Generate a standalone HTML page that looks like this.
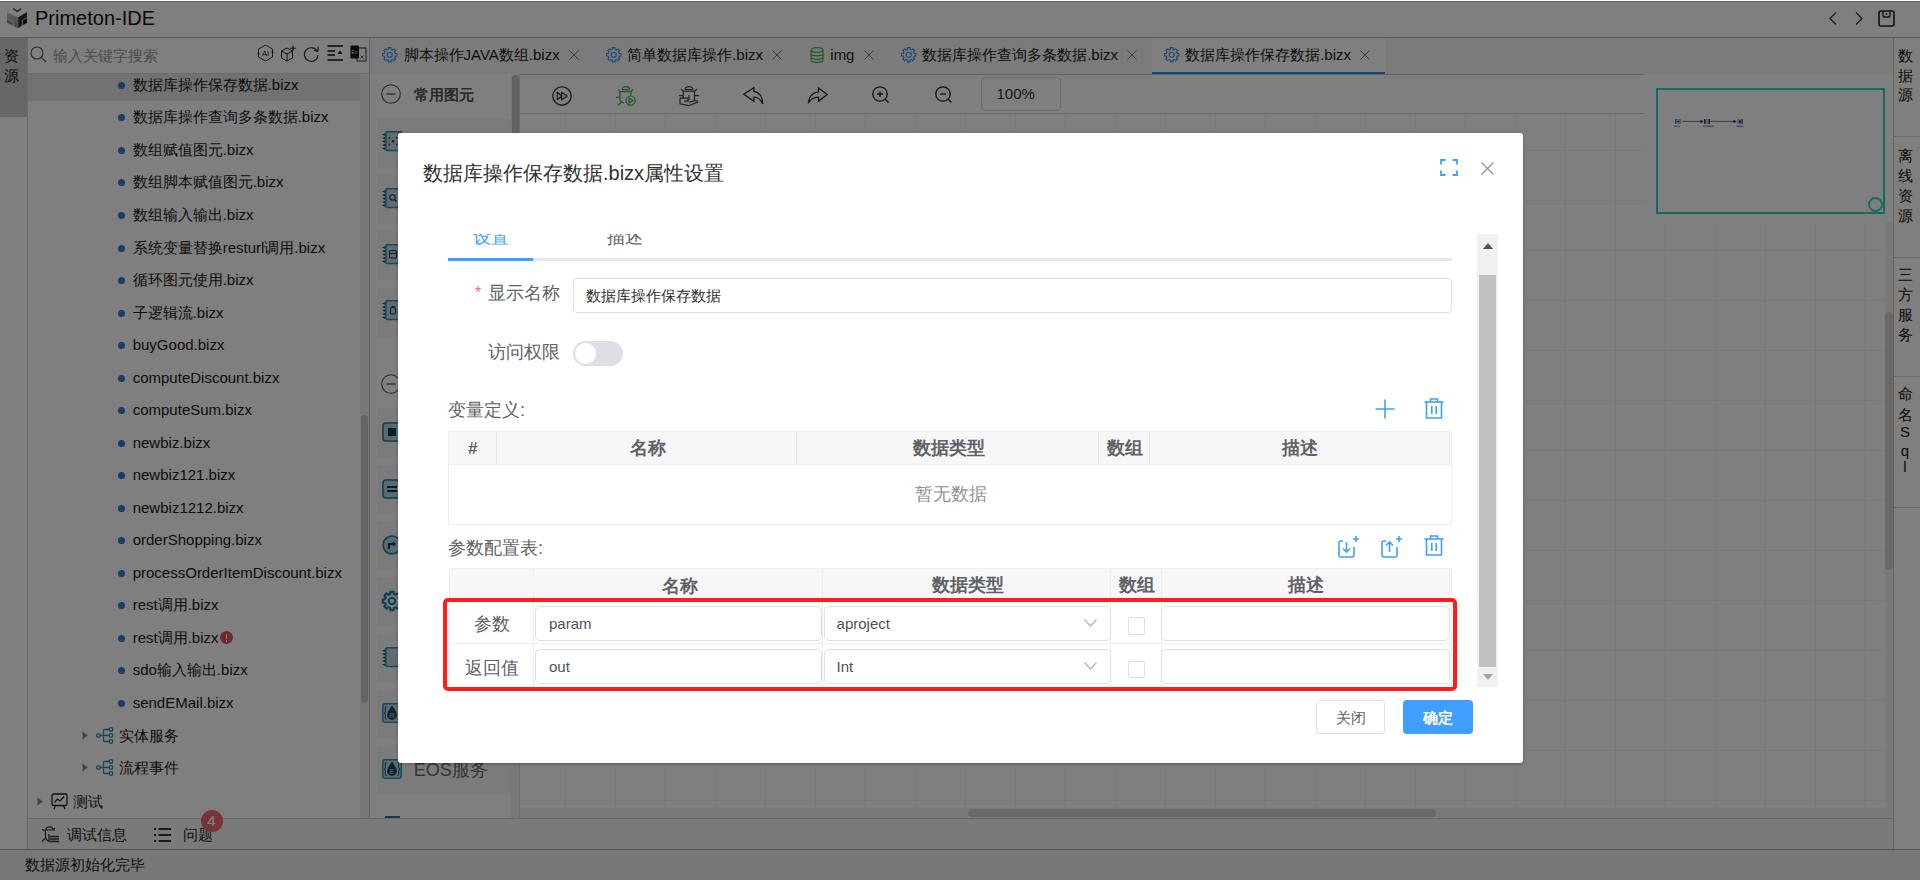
<!DOCTYPE html>
<html><head><meta charset="utf-8"><style>
*{box-sizing:border-box;margin:0;padding:0}
html,body{width:1920px;height:880px;overflow:hidden;background:#fff;font-family:"Liberation Sans",sans-serif;color:#303133}
.a{position:absolute}
.t{position:absolute;white-space:nowrap;line-height:1}
svg{position:absolute;overflow:visible}
#title{left:0;top:1px;width:1920px;height:37px;background:#fff;border-top:1px solid #c8c8c8;border-bottom:1px solid #b8b8b8}
#lstrip{left:0;top:38px;width:28px;height:812px;background:#fff;border-right:1px solid #d4d4d4}
#lstripSel{left:0;top:38px;width:27px;height:79px;background:#cfcfcf}
#tree{left:28px;top:38px;width:342px;height:780px;background:#fff}
#search{left:28px;top:38px;width:342px;height:36px;border-bottom:1px solid #d8d8d8}
#palette{left:369px;top:74px;width:151px;height:744px;background:#fff;border-left:1px solid #c8c8c8;border-right:1px solid #d8d8d8}
#tabs{left:369px;top:38px;width:1524px;height:37px;background:#f7f7f7;border-bottom:1px solid #c8c8c8;border-left:1px solid #c8c8c8}
#toolbar{left:520px;top:74px;width:1124px;height:40px;border-bottom:1px solid #d0d0d0}
#canvas{left:520px;top:114px;width:1365px;height:694px;
  background-image:linear-gradient(to right, rgba(0,0,0,0.045) 1px, transparent 1px),linear-gradient(to bottom, rgba(0,0,0,0.045) 1px, transparent 1px);
  background-size:50px 50px;background-position:45px 36px}
#rstrip{left:1893px;top:38px;width:27px;height:812px;background:#fff;border-left:1px solid #c4c4c4}
#bottom{left:28px;top:818px;width:1865px;height:32px;background:#f5f5f5;border-top:1px solid #d0d0d0;border-bottom:1px solid #a8a8a8}
#status{left:0;top:849px;width:1920px;height:31px;background:#f0f0f0;border-top:1px solid #a8a8a8}
.mask{position:absolute;left:0;top:1px;width:1920px;height:879px;background:rgba(0,0,0,0.5)}
.dlg{position:absolute;left:398px;top:133px;width:1125px;height:630px;background:#fff;border-radius:3px;box-shadow:0 1px 3px rgba(0,0,0,.3)}
</style></head><body>
<div class="a" style="left:0;top:0;width:1920px;height:1px;background:#fff"></div>
<div class="a" id="title"></div>
<svg style="left:0;top:0" width="40" height="40" viewBox="0 0 40 40">
<defs><linearGradient id="lg1" x1="0" y1="0" x2="0" y2="1"><stop offset="0" stop-color="#c4c4c4"/><stop offset="1" stop-color="#8a8a8a"/></linearGradient></defs>
<path d="M13.2 8.6 L17.3 11.4 L21 8.9" fill="none" stroke="#444" stroke-width="1.4"/>
<path d="M7 12.2 L17.9 17.2 L17.9 28.2 L13.6 26 L13.6 21.6 L7 18.4 Z" fill="url(#lg1)"/>
<path d="M7 19.2 L12.8 22 L12.8 25.6 L7 22.8 Z" fill="#8c8c8c"/>
<path d="M18.3 17.2 L27 12.2 L27 17.6 L21.8 20.3 L21.8 25.8 L18.3 27.9 Z" fill="#2a2a2a"/>
<path d="M22.6 20.4 L27 18.3 L27 23 L22.6 25.2 Z" fill="#161616"/>
</svg>
<div class="t" style="left:35.0px;top:8.0px;font-size:20px;color:#111;font-weight:400;top:8px">Primeton-IDE</div>
<svg style="left:1829px;top:12px" width="8" height="13" viewBox="0 0 8 13"><path d="M7 0.5 L1 6.5 L7 12.5" fill="none" stroke="#333" stroke-width="1.2"/></svg>
<svg style="left:1855px;top:12px" width="8" height="13" viewBox="0 0 8 13"><path d="M1 0.5 L7 6.5 L1 12.5" fill="none" stroke="#333" stroke-width="1.2"/></svg>
<svg style="left:1878px;top:10px" width="17" height="17" viewBox="0 0 17 17"><rect x="1" y="1" width="15" height="15" rx="2" fill="none" stroke="#222" stroke-width="1.6"/><path d="M5 1 V5.5 Q5 7 6.5 7 H10.5 Q12 7 12 5.5 V1" fill="none" stroke="#222" stroke-width="1.4"/><path d="M8.5 3 V5" stroke="#222" stroke-width="1.2"/></svg>
<div class="a" id="lstrip"></div>
<div class="a" id="lstripSel"></div>
<div class="t" style="left:4.2px;top:48.0px;font-size:15px;color:#111;font-weight:400;">资</div>
<div class="t" style="left:4.2px;top:68.0px;font-size:15px;color:#111;font-weight:400;">源</div>
<div class="a" id="tree"></div>
<div class="a" id="search"></div>
<svg style="left:30px;top:46px" width="17" height="17" viewBox="0 0 17 17"><circle cx="7" cy="7" r="6" fill="none" stroke="#555" stroke-width="1.1"/><path d="M11.3 11.3 L16 16" stroke="#555" stroke-width="1.2"/></svg>
<div class="t" style="left:53.0px;top:48.0px;font-size:15px;color:#9a9a9a;font-weight:400;">输入关键字搜索</div>
<svg style="left:257px;top:44px" width="17" height="18" viewBox="0 0 17 18">
<path d="M8.5 1 L15.5 5 L15.5 13 L8.5 17 L1.5 13 L1.5 5 Z" fill="none" stroke="#222" stroke-width="0.9"/>
<text x="8.5" y="11.8" font-size="7.5" font-family="Liberation Sans" font-weight="400" text-anchor="middle" fill="#222">AI</text>
<circle cx="1.5" cy="9.5" r="1" fill="#222"/><circle cx="15.5" cy="8" r="1" fill="#222"/></svg>
<svg style="left:280px;top:45px" width="17" height="17" viewBox="0 0 17 17">
<path d="M7 3 L12.5 6 L12.5 13 L7 16 L1.5 13 L1.5 6 Z M1.5 6 L7 9 L12.5 6 M7 9 V16" fill="none" stroke="#222" stroke-width="1"/>
<path d="M13 0.5 V6 M10.3 3.2 H15.8" stroke="#222" stroke-width="1.1"/></svg>
<svg style="left:303px;top:46px" width="17" height="17" viewBox="0 0 17 17"><path d="M14.5 6 A6.8 6.8 0 1 0 15 9" fill="none" stroke="#333" stroke-width="1.2"/><path d="M11 4.5 L15 4.8 L15.2 0.8" fill="none" stroke="#333" stroke-width="1.1"/></svg>
<svg style="left:327px;top:45px" width="17" height="16" viewBox="0 0 17 16"><path d="M0.5 1 H16 M0.5 6 H8 M0.5 10 H8 M0.5 15 H16" stroke="#111" stroke-width="1.3"/><path d="M10.5 9 L13 5.5 L15.5 9 Z" fill="#111"/></svg>
<svg style="left:350px;top:45px" width="17" height="17" viewBox="0 0 17 17"><rect x="7" y="3" width="9" height="13" fill="none" stroke="#333" stroke-width="1"/><rect x="0.5" y="0.5" width="8.5" height="13" rx="1" fill="#111"/><text x="4.5" y="9" font-size="5" fill="#ddd" text-anchor="middle" font-family="Liberation Sans">En</text><path d="M10.5 10.5 L13.5 13.5 M13.5 10.5 L10.5 13.5" stroke="#333" stroke-width="0.8"/></svg>
<div class="a" style="left:28px;top:73.5px;width:332px;height:27px;background:#e4e4e4"></div>
<div class="a" style="left:360px;top:74px;width:9px;height:744px;background:#f0f0f0"></div>
<div class="a" style="left:360.5px;top:415px;width:7.5px;height:288px;background:#c8c8c8;border-radius:4px"></div>
<div class="a" style="left:118px;top:81.8px;width:7px;height:7px;border-radius:50%;background:#2f7ad6"></div>
<div class="t" style="left:132.7px;top:76.8px;font-size:15px;color:#1a1a1a;font-weight:400;">数据库操作保存数据.bizx</div>
<div class="a" style="left:118px;top:114.3px;width:7px;height:7px;border-radius:50%;background:#2f7ad6"></div>
<div class="t" style="left:132.7px;top:109.3px;font-size:15px;color:#1a1a1a;font-weight:400;">数据库操作查询多条数据.bizx</div>
<div class="a" style="left:118px;top:146.9px;width:7px;height:7px;border-radius:50%;background:#2f7ad6"></div>
<div class="t" style="left:132.7px;top:141.9px;font-size:15px;color:#1a1a1a;font-weight:400;">数组赋值图元.bizx</div>
<div class="a" style="left:118px;top:179.4px;width:7px;height:7px;border-radius:50%;background:#2f7ad6"></div>
<div class="t" style="left:132.7px;top:174.4px;font-size:15px;color:#1a1a1a;font-weight:400;">数组脚本赋值图元.bizx</div>
<div class="a" style="left:118px;top:211.9px;width:7px;height:7px;border-radius:50%;background:#2f7ad6"></div>
<div class="t" style="left:132.7px;top:206.9px;font-size:15px;color:#1a1a1a;font-weight:400;">数组输入输出.bizx</div>
<div class="a" style="left:118px;top:244.5px;width:7px;height:7px;border-radius:50%;background:#2f7ad6"></div>
<div class="t" style="left:132.7px;top:239.5px;font-size:15px;color:#1a1a1a;font-weight:400;">系统变量替换resturl调用.bizx</div>
<div class="a" style="left:118px;top:277.0px;width:7px;height:7px;border-radius:50%;background:#2f7ad6"></div>
<div class="t" style="left:132.7px;top:272.0px;font-size:15px;color:#1a1a1a;font-weight:400;">循环图元使用.bizx</div>
<div class="a" style="left:118px;top:309.5px;width:7px;height:7px;border-radius:50%;background:#2f7ad6"></div>
<div class="t" style="left:132.7px;top:304.5px;font-size:15px;color:#1a1a1a;font-weight:400;">子逻辑流.bizx</div>
<div class="a" style="left:118px;top:342.0px;width:7px;height:7px;border-radius:50%;background:#2f7ad6"></div>
<div class="t" style="left:132.7px;top:337.0px;font-size:15px;color:#1a1a1a;font-weight:400;">buyGood.bizx</div>
<div class="a" style="left:118px;top:374.6px;width:7px;height:7px;border-radius:50%;background:#2f7ad6"></div>
<div class="t" style="left:132.7px;top:369.6px;font-size:15px;color:#1a1a1a;font-weight:400;">computeDiscount.bizx</div>
<div class="a" style="left:118px;top:407.1px;width:7px;height:7px;border-radius:50%;background:#2f7ad6"></div>
<div class="t" style="left:132.7px;top:402.1px;font-size:15px;color:#1a1a1a;font-weight:400;">computeSum.bizx</div>
<div class="a" style="left:118px;top:439.6px;width:7px;height:7px;border-radius:50%;background:#2f7ad6"></div>
<div class="t" style="left:132.7px;top:434.6px;font-size:15px;color:#1a1a1a;font-weight:400;">newbiz.bizx</div>
<div class="a" style="left:118px;top:472.2px;width:7px;height:7px;border-radius:50%;background:#2f7ad6"></div>
<div class="t" style="left:132.7px;top:467.2px;font-size:15px;color:#1a1a1a;font-weight:400;">newbiz121.bizx</div>
<div class="a" style="left:118px;top:504.7px;width:7px;height:7px;border-radius:50%;background:#2f7ad6"></div>
<div class="t" style="left:132.7px;top:499.7px;font-size:15px;color:#1a1a1a;font-weight:400;">newbiz1212.bizx</div>
<div class="a" style="left:118px;top:537.2px;width:7px;height:7px;border-radius:50%;background:#2f7ad6"></div>
<div class="t" style="left:132.7px;top:532.2px;font-size:15px;color:#1a1a1a;font-weight:400;">orderShopping.bizx</div>
<div class="a" style="left:118px;top:569.8px;width:7px;height:7px;border-radius:50%;background:#2f7ad6"></div>
<div class="t" style="left:132.7px;top:564.8px;font-size:15px;color:#1a1a1a;font-weight:400;">processOrderItemDiscount.bizx</div>
<div class="a" style="left:118px;top:602.3px;width:7px;height:7px;border-radius:50%;background:#2f7ad6"></div>
<div class="t" style="left:132.7px;top:597.3px;font-size:15px;color:#1a1a1a;font-weight:400;">rest调用.bizx</div>
<div class="a" style="left:118px;top:634.8px;width:7px;height:7px;border-radius:50%;background:#2f7ad6"></div>
<div class="t" style="left:132.7px;top:629.8px;font-size:15px;color:#1a1a1a;font-weight:400;">rest调用.bizx</div>
<div class="a" style="left:118px;top:667.3px;width:7px;height:7px;border-radius:50%;background:#2f7ad6"></div>
<div class="t" style="left:132.7px;top:662.3px;font-size:15px;color:#1a1a1a;font-weight:400;">sdo输入输出.bizx</div>
<div class="a" style="left:118px;top:699.9px;width:7px;height:7px;border-radius:50%;background:#2f7ad6"></div>
<div class="t" style="left:132.7px;top:694.9px;font-size:15px;color:#1a1a1a;font-weight:400;">sendEMail.bizx</div>
<div class="a" style="left:220px;top:631px;width:13px;height:13px;border-radius:50%;background:#e05252"></div>
<div class="a" style="left:225.6px;top:634px;width:1.8px;height:5px;background:#fff"></div><div class="a" style="left:225.6px;top:640px;width:1.8px;height:1.8px;background:#fff"></div>
<svg style="left:81.5px;top:730.9px" width="7" height="9" viewBox="0 0 7 9"><path d="M0.5 0.5 L6 4.5 L0.5 8.5 Z" fill="#8a8a8a"/></svg>
<svg style="left:96px;top:726.9px" width="18" height="17" viewBox="0 0 18 17"><g fill="none" stroke="#2a8ab0" stroke-width="1.3"><circle cx="2.5" cy="8.5" r="1.8"/><circle cx="15" cy="2.5" r="1.8"/><circle cx="15" cy="8.5" r="1.8"/><circle cx="15" cy="14.5" r="1.8"/><path d="M4.3 8.5 H13.2 M7.5 8.5 V3.5 Q7.5 2.5 8.5 2.5 H13.2 M7.5 8.5 V13.5 Q7.5 14.5 8.5 14.5 H13.2"/></g></svg>
<div class="t" style="left:118.6px;top:727.8px;font-size:15px;color:#1a1a1a;font-weight:400;">实体服务</div>
<svg style="left:81.5px;top:763.1px" width="7" height="9" viewBox="0 0 7 9"><path d="M0.5 0.5 L6 4.5 L0.5 8.5 Z" fill="#8a8a8a"/></svg>
<svg style="left:96px;top:759.1px" width="18" height="17" viewBox="0 0 18 17"><g fill="none" stroke="#2a8ab0" stroke-width="1.3"><circle cx="2.5" cy="8.5" r="1.8"/><circle cx="15" cy="2.5" r="1.8"/><circle cx="15" cy="8.5" r="1.8"/><circle cx="15" cy="14.5" r="1.8"/><path d="M4.3 8.5 H13.2 M7.5 8.5 V3.5 Q7.5 2.5 8.5 2.5 H13.2 M7.5 8.5 V13.5 Q7.5 14.5 8.5 14.5 H13.2"/></g></svg>
<div class="t" style="left:118.6px;top:760.0px;font-size:15px;color:#1a1a1a;font-weight:400;">流程事件</div>
<svg style="left:37px;top:796.5px" width="7" height="9" viewBox="0 0 7 9"><path d="M0.5 0.5 L6 4.5 L0.5 8.5 Z" fill="#8a8a8a"/></svg>
<svg style="left:50.5px;top:793px" width="17" height="17" viewBox="0 0 17 17"><rect x="1" y="1" width="15" height="11.5" rx="1.5" fill="none" stroke="#222" stroke-width="1.3"/><path d="M3.5 9.5 L6.5 6 L9 8 L13 3.5" fill="none" stroke="#222" stroke-width="1.2"/><path d="M4.5 12.5 L3 16.3 M12.5 12.5 L14 16.3" stroke="#222" stroke-width="1.3"/></svg>
<div class="t" style="left:72.5px;top:794.2px;font-size:15px;color:#1a1a1a;font-weight:400;">测试</div>
<div class="a" id="tabs"></div>
<div class="a" style="left:1152px;top:38px;width:233px;height:35px;background:#fff"></div>
<div class="a" style="left:1152px;top:71.5px;width:233px;height:2.5px;background:#3388ee"></div>
<svg style="left:382px;top:46.8px" width="15.5" height="15.5" viewBox="0 0 24 24"><path fill="none" stroke="#3f8ee0" stroke-width="1.75" stroke-linejoin="round" d="M20.53 9.85 L23.03 10.03 L23.03 13.97 L20.53 14.15 L20.30 14.24 L19.45 16.29 L19.55 16.51 L21.19 18.40 L18.40 21.19 L16.51 19.55 L16.29 19.45 L14.24 20.30 L14.15 20.53 L13.97 23.03 L10.03 23.03 L9.85 20.53 L9.76 20.30 L7.71 19.45 L7.49 19.55 L5.60 21.19 L2.81 18.40 L4.45 16.51 L4.55 16.29 L3.70 14.24 L3.47 14.15 L0.97 13.97 L0.97 10.03 L3.47 9.85 L3.70 9.76 L4.55 7.71 L4.45 7.49 L2.81 5.60 L5.60 2.81 L7.49 4.45 L7.71 4.55 L9.76 3.70 L9.85 3.47 L10.03 0.97 L13.97 0.97 L14.15 3.47 L14.24 3.70 L16.29 4.55 L16.51 4.45 L18.40 2.81 L21.19 5.60 L19.55 7.49 L19.45 7.71 L20.30 9.76 Z"/><circle cx="12" cy="12" r="3.9" fill="none" stroke="#3f8ee0" stroke-width="1.75"/></svg>
<div class="t" style="left:403.5px;top:47.0px;font-size:15px;color:#1a1a1a;font-weight:400;">脚本操作JAVA数组.bizx</div>
<svg style="left:568.7px;top:49.5px" width="10" height="10" viewBox="0 0 10 10"><path d="M0.5 0.5 L9.5 9.5 M9.5 0.5 L0.5 9.5" stroke="#7a7a7a" stroke-width="1"/></svg>
<svg style="left:606px;top:46.8px" width="15.5" height="15.5" viewBox="0 0 24 24"><path fill="none" stroke="#3f8ee0" stroke-width="1.75" stroke-linejoin="round" d="M20.53 9.85 L23.03 10.03 L23.03 13.97 L20.53 14.15 L20.30 14.24 L19.45 16.29 L19.55 16.51 L21.19 18.40 L18.40 21.19 L16.51 19.55 L16.29 19.45 L14.24 20.30 L14.15 20.53 L13.97 23.03 L10.03 23.03 L9.85 20.53 L9.76 20.30 L7.71 19.45 L7.49 19.55 L5.60 21.19 L2.81 18.40 L4.45 16.51 L4.55 16.29 L3.70 14.24 L3.47 14.15 L0.97 13.97 L0.97 10.03 L3.47 9.85 L3.70 9.76 L4.55 7.71 L4.45 7.49 L2.81 5.60 L5.60 2.81 L7.49 4.45 L7.71 4.55 L9.76 3.70 L9.85 3.47 L10.03 0.97 L13.97 0.97 L14.15 3.47 L14.24 3.70 L16.29 4.55 L16.51 4.45 L18.40 2.81 L21.19 5.60 L19.55 7.49 L19.45 7.71 L20.30 9.76 Z"/><circle cx="12" cy="12" r="3.9" fill="none" stroke="#3f8ee0" stroke-width="1.75"/></svg>
<div class="t" style="left:627.2px;top:47.0px;font-size:15px;color:#1a1a1a;font-weight:400;">简单数据库操作.bizx</div>
<svg style="left:772px;top:49.5px" width="10" height="10" viewBox="0 0 10 10"><path d="M0.5 0.5 L9.5 9.5 M9.5 0.5 L0.5 9.5" stroke="#7a7a7a" stroke-width="1"/></svg>
<svg style="left:809.5px;top:47px" width="14" height="16" viewBox="0 0 14 16"><g fill="none" stroke="#4caf50" stroke-width="1.2"><ellipse cx="7" cy="3" rx="6" ry="2.3"/><path d="M1 3 V13 Q1 15.3 7 15.3 Q13 15.3 13 13 V3 M1 6.5 Q1 8.8 7 8.8 Q13 8.8 13 6.5 M1 10 Q1 12.3 7 12.3 Q13 12.3 13 10"/></g></svg>
<div class="t" style="left:830.3px;top:47.0px;font-size:15px;color:#1a1a1a;font-weight:400;">img</div>
<svg style="left:863.5px;top:49.5px" width="10" height="10" viewBox="0 0 10 10"><path d="M0.5 0.5 L9.5 9.5 M9.5 0.5 L0.5 9.5" stroke="#7a7a7a" stroke-width="1"/></svg>
<svg style="left:901px;top:46.8px" width="15.5" height="15.5" viewBox="0 0 24 24"><path fill="none" stroke="#3f8ee0" stroke-width="1.75" stroke-linejoin="round" d="M20.53 9.85 L23.03 10.03 L23.03 13.97 L20.53 14.15 L20.30 14.24 L19.45 16.29 L19.55 16.51 L21.19 18.40 L18.40 21.19 L16.51 19.55 L16.29 19.45 L14.24 20.30 L14.15 20.53 L13.97 23.03 L10.03 23.03 L9.85 20.53 L9.76 20.30 L7.71 19.45 L7.49 19.55 L5.60 21.19 L2.81 18.40 L4.45 16.51 L4.55 16.29 L3.70 14.24 L3.47 14.15 L0.97 13.97 L0.97 10.03 L3.47 9.85 L3.70 9.76 L4.55 7.71 L4.45 7.49 L2.81 5.60 L5.60 2.81 L7.49 4.45 L7.71 4.55 L9.76 3.70 L9.85 3.47 L10.03 0.97 L13.97 0.97 L14.15 3.47 L14.24 3.70 L16.29 4.55 L16.51 4.45 L18.40 2.81 L21.19 5.60 L19.55 7.49 L19.45 7.71 L20.30 9.76 Z"/><circle cx="12" cy="12" r="3.9" fill="none" stroke="#3f8ee0" stroke-width="1.75"/></svg>
<div class="t" style="left:922.2px;top:47.0px;font-size:15px;color:#1a1a1a;font-weight:400;">数据库操作查询多条数据.bizx</div>
<svg style="left:1127px;top:49.5px" width="10" height="10" viewBox="0 0 10 10"><path d="M0.5 0.5 L9.5 9.5 M9.5 0.5 L0.5 9.5" stroke="#7a7a7a" stroke-width="1"/></svg>
<svg style="left:1164px;top:46.8px" width="15.5" height="15.5" viewBox="0 0 24 24"><path fill="none" stroke="#3f8ee0" stroke-width="1.75" stroke-linejoin="round" d="M20.53 9.85 L23.03 10.03 L23.03 13.97 L20.53 14.15 L20.30 14.24 L19.45 16.29 L19.55 16.51 L21.19 18.40 L18.40 21.19 L16.51 19.55 L16.29 19.45 L14.24 20.30 L14.15 20.53 L13.97 23.03 L10.03 23.03 L9.85 20.53 L9.76 20.30 L7.71 19.45 L7.49 19.55 L5.60 21.19 L2.81 18.40 L4.45 16.51 L4.55 16.29 L3.70 14.24 L3.47 14.15 L0.97 13.97 L0.97 10.03 L3.47 9.85 L3.70 9.76 L4.55 7.71 L4.45 7.49 L2.81 5.60 L5.60 2.81 L7.49 4.45 L7.71 4.55 L9.76 3.70 L9.85 3.47 L10.03 0.97 L13.97 0.97 L14.15 3.47 L14.24 3.70 L16.29 4.55 L16.51 4.45 L18.40 2.81 L21.19 5.60 L19.55 7.49 L19.45 7.71 L20.30 9.76 Z"/><circle cx="12" cy="12" r="3.9" fill="none" stroke="#3f8ee0" stroke-width="1.75"/></svg>
<div class="t" style="left:1185.2px;top:47.0px;font-size:15px;color:#1a1a1a;font-weight:400;">数据库操作保存数据.bizx</div>
<svg style="left:1360.4px;top:49.5px" width="10" height="10" viewBox="0 0 10 10"><path d="M0.5 0.5 L9.5 9.5 M9.5 0.5 L0.5 9.5" stroke="#7a7a7a" stroke-width="1"/></svg>
<div class="a" id="palette"></div>
<div class="a" style="left:511px;top:75px;width:8px;height:743px;background:#f1f1f1"></div>
<div class="a" style="left:511.5px;top:75px;width:7px;height:200px;background:#c4c4c4;border-radius:3px"></div>
<svg style="left:381.4px;top:84px" width="20" height="20" viewBox="0 0 20 20"><circle cx="10" cy="10" r="9.3" fill="none" stroke="#555" stroke-width="1.1"/><path d="M5.5 10 H14.5" stroke="#555" stroke-width="1.3"/></svg>
<div class="t" style="left:414.3px;top:87.0px;font-size:15px;color:#555;font-weight:700;">常用图元</div>
<svg style="left:381.4px;top:374px" width="20" height="20" viewBox="0 0 20 20"><circle cx="10" cy="10" r="9.3" fill="none" stroke="#555" stroke-width="1.1"/><path d="M5.5 10 H14.5" stroke="#555" stroke-width="1.3"/></svg>
<div class="a" style="left:376.5px;top:118.6px;width:134px;height:49px;background:#f6f6f6"></div>
<div class="a" style="left:376.5px;top:175.0px;width:134px;height:49px;background:#f6f6f6"></div>
<div class="a" style="left:376.5px;top:231.3px;width:134px;height:49px;background:#f6f6f6"></div>
<div class="a" style="left:376.5px;top:287.6px;width:134px;height:49px;background:#f6f6f6"></div>
<div class="a" style="left:376.5px;top:408.3px;width:134px;height:49px;background:#f6f6f6"></div>
<div class="a" style="left:376.5px;top:464.6px;width:134px;height:49px;background:#f6f6f6"></div>
<div class="a" style="left:376.5px;top:520.9px;width:134px;height:49px;background:#f6f6f6"></div>
<div class="a" style="left:376.5px;top:577.2px;width:134px;height:49px;background:#f6f6f6"></div>
<div class="a" style="left:376.5px;top:633.5px;width:134px;height:49px;background:#f6f6f6"></div>
<div class="a" style="left:376.5px;top:689.8px;width:134px;height:49px;background:#f6f6f6"></div>
<div class="a" style="left:376.5px;top:746.1px;width:134px;height:49px;background:#f6f6f6"></div>
<svg style="left:382px;top:131.4px" width="20" height="21" viewBox="0 0 20 21"><g fill="#0f4860"><path d="M0 3.6 L3.6 2.2 V5 Z"/><path d="M0 7.1 L3.6 5.7 V8.5 Z"/><path d="M0 10.6 L3.6 9.2 V12 Z"/><path d="M0 14.1 L3.6 12.7 V15.5 Z"/><path d="M0 17.6 L3.6 16.2 V19 Z"/></g><path d="M5 0.8 H19.4 V19.6 H5 L3.9 18.5 V1.9 Z" fill="#c2d8e4" stroke="#2e94be" stroke-width="1.5"/><path d="M8 6.5 H7 V8 M14 6.5 H15 V8 M8 14 H7 V12.5 M14 14 H15 V12.5" fill="none" stroke="#0d3c55" stroke-width="1"/><circle cx="11" cy="10.3" r="1.3" fill="#0d3c55"/></svg>
<svg style="left:382px;top:187.8px" width="20" height="21" viewBox="0 0 20 21"><g fill="#0f4860"><path d="M0 3.6 L3.6 2.2 V5 Z"/><path d="M0 7.1 L3.6 5.7 V8.5 Z"/><path d="M0 10.6 L3.6 9.2 V12 Z"/><path d="M0 14.1 L3.6 12.7 V15.5 Z"/><path d="M0 17.6 L3.6 16.2 V19 Z"/></g><path d="M5 0.8 H19.4 V19.6 H5 L3.9 18.5 V1.9 Z" fill="#c2d8e4" stroke="#2e94be" stroke-width="1.5"/><circle cx="10.5" cy="9.5" r="2.7" fill="none" stroke="#0d3c55" stroke-width="1.1"/><path d="M12.5 11.5 L14.5 13.5" stroke="#0d3c55" stroke-width="1.2"/></svg>
<svg style="left:382px;top:244.1px" width="20" height="21" viewBox="0 0 20 21"><g fill="#0f4860"><path d="M0 3.6 L3.6 2.2 V5 Z"/><path d="M0 7.1 L3.6 5.7 V8.5 Z"/><path d="M0 10.6 L3.6 9.2 V12 Z"/><path d="M0 14.1 L3.6 12.7 V15.5 Z"/><path d="M0 17.6 L3.6 16.2 V19 Z"/></g><path d="M5 0.8 H19.4 V19.6 H5 L3.9 18.5 V1.9 Z" fill="#c2d8e4" stroke="#2e94be" stroke-width="1.5"/><rect x="7.5" y="6.5" width="7" height="7.5" rx="1" fill="none" stroke="#0d3c55" stroke-width="1.1"/><path d="M7.5 9.5 H14.5" stroke="#0d3c55" stroke-width="1"/></svg>
<svg style="left:382px;top:300.4px" width="20" height="21" viewBox="0 0 20 21"><g fill="#0f4860"><path d="M0 3.6 L3.6 2.2 V5 Z"/><path d="M0 7.1 L3.6 5.7 V8.5 Z"/><path d="M0 10.6 L3.6 9.2 V12 Z"/><path d="M0 14.1 L3.6 12.7 V15.5 Z"/><path d="M0 17.6 L3.6 16.2 V19 Z"/></g><path d="M5 0.8 H19.4 V19.6 H5 L3.9 18.5 V1.9 Z" fill="#c2d8e4" stroke="#2e94be" stroke-width="1.5"/><rect x="8.5" y="7.5" width="5" height="6.5" rx="1" fill="none" stroke="#0d3c55" stroke-width="1.1"/><path d="M9.5 6.5 H12.5" stroke="#0d3c55" stroke-width="1"/></svg>
<svg style="left:382px;top:422.3px" width="20" height="20" viewBox="0 0 20 20"><rect x="1" y="1" width="18" height="18" rx="3" fill="#b4d4e2" stroke="#1e7aa3" stroke-width="1.5"/><rect x="6" y="6" width="8" height="8" fill="#0d3c55"/></svg>
<svg style="left:382px;top:478.6px" width="20" height="20" viewBox="0 0 20 20"><rect x="1" y="1" width="18" height="18" rx="3" fill="#b4d4e2" stroke="#1e7aa3" stroke-width="1.5"/><path d="M5 8 H15 M5 12 H15" stroke="#0d3c55" stroke-width="2"/></svg>
<svg style="left:382px;top:534.9px" width="20" height="20" viewBox="0 0 20 20"><circle cx="10" cy="10" r="9" fill="#b4d4e2" stroke="#1e7aa3" stroke-width="1.5"/><path d="M7 14 V9 H12" fill="none" stroke="#0d3c55" stroke-width="2"/><path d="M11 6 L14 9 L11 12 Z" fill="#0d3c55"/></svg>
<svg style="left:382px;top:591.2px" width="20" height="20" viewBox="0 0 24 24"><path fill="none" stroke="#1e7aa3" stroke-width="2.6" stroke-linejoin="round" d="M20.53 9.85 L23.03 10.03 L23.03 13.97 L20.53 14.15 L20.30 14.24 L19.45 16.29 L19.55 16.51 L21.19 18.40 L18.40 21.19 L16.51 19.55 L16.29 19.45 L14.24 20.30 L14.15 20.53 L13.97 23.03 L10.03 23.03 L9.85 20.53 L9.76 20.30 L7.71 19.45 L7.49 19.55 L5.60 21.19 L2.81 18.40 L4.45 16.51 L4.55 16.29 L3.70 14.24 L3.47 14.15 L0.97 13.97 L0.97 10.03 L3.47 9.85 L3.70 9.76 L4.55 7.71 L4.45 7.49 L2.81 5.60 L5.60 2.81 L7.49 4.45 L7.71 4.55 L9.76 3.70 L9.85 3.47 L10.03 0.97 L13.97 0.97 L14.15 3.47 L14.24 3.70 L16.29 4.55 L16.51 4.45 L18.40 2.81 L21.19 5.60 L19.55 7.49 L19.45 7.71 L20.30 9.76 Z"/><circle cx="12" cy="12" r="3.9" fill="none" stroke="#1e7aa3" stroke-width="2.6"/></svg>
<svg style="left:382px;top:646.5px" width="20" height="21" viewBox="0 0 20 21"><g fill="#0f4860"><path d="M0 3.6 L3.6 2.2 V5 Z"/><path d="M0 7.1 L3.6 5.7 V8.5 Z"/><path d="M0 10.6 L3.6 9.2 V12 Z"/><path d="M0 14.1 L3.6 12.7 V15.5 Z"/><path d="M0 17.6 L3.6 16.2 V19 Z"/></g><path d="M5 0.8 H19.4 V19.6 H5 L3.9 18.5 V1.9 Z" fill="#c2d8e4" stroke="#2e94be" stroke-width="1.5"/></svg>
<svg style="left:382px;top:702.8px" width="20" height="20" viewBox="0 0 20 20"><rect x="0.8" y="0.8" width="18.4" height="18.4" rx="2.2" fill="#c2d8e4" stroke="#2e94be" stroke-width="1.5"/><path d="M4.6 3.5 Q3.3 3.5 3.3 5 V8.6 L2.4 10 L3.3 11.4 V15 Q3.3 16.5 4.6 16.5 M15.4 3.5 Q16.7 3.5 16.7 5 V8.6 L17.6 10 L16.7 11.4 V15 Q16.7 16.5 15.4 16.5" fill="none" stroke="#0f4860" stroke-width="0.9"/><path d="M10 2.6 Q14.8 8.6 14.8 12.2 A4.8 4.8 0 0 1 5.2 12.2 Q5.2 8.6 10 2.6 Z" fill="#0f4860"/><text x="10" y="15.4" font-size="7.6" fill="#c2d8e4" text-anchor="middle" font-family="Liberation Sans">R</text></svg>
<svg style="left:382px;top:759px" width="20" height="20" viewBox="0 0 20 20"><rect x="0.8" y="0.8" width="18.4" height="18.4" rx="2.2" fill="#c2d8e4" stroke="#2e94be" stroke-width="1.5"/><path d="M4.6 3.5 Q3.3 3.5 3.3 5 V8.6 L2.4 10 L3.3 11.4 V15 Q3.3 16.5 4.6 16.5 M15.4 3.5 Q16.7 3.5 16.7 5 V8.6 L17.6 10 L16.7 11.4 V15 Q16.7 16.5 15.4 16.5" fill="none" stroke="#0f4860" stroke-width="0.9"/><path d="M10 2.6 Q14.8 8.6 14.8 12.2 A4.8 4.8 0 0 1 5.2 12.2 Q5.2 8.6 10 2.6 Z" fill="#0f4860"/><text x="10" y="15.4" font-size="7.6" fill="#c2d8e4" text-anchor="middle" font-family="Liberation Sans">E</text></svg>
<div class="t" style="left:413.7px;top:761.0px;font-size:18px;color:#6a6a6a;font-weight:400;">EOS服务</div>
<div class="a" style="left:385px;top:816px;width:15px;height:2px;background:#1e7aa3"></div>
<div class="a" id="toolbar"></div>
<svg style="left:552px;top:86px" width="20" height="20" viewBox="0 0 20 20"><circle cx="10" cy="10" r="9.2" fill="none" stroke="#333" stroke-width="1.35"/><path d="M5.3 6.3 V13.7 L9.8 10 Z M9.6 6.3 V13.7 L15.3 10 Z" fill="none" stroke="#333" stroke-width="1.15" stroke-linejoin="round"/></svg>
<svg style="left:616px;top:86px" width="20" height="20" viewBox="0 0 20 20"><g fill="none" stroke="#3fae52" stroke-width="1.2"><path d="M6.2 3.6 Q6.2 0.6 9.9 0.6 Q13.6 0.6 13.6 3.6 Z"/><path d="M3.9 5.7 H15 V9.5"/><path d="M3.9 5.7 V13 Q3.9 16.3 8 16.8"/><path d="M2.1 3.4 L3.9 5.7 M16.8 3.4 L15 5.7 M0 11.3 H3.9 M2.1 19.5 L5.2 16.1"/><circle cx="14.6" cy="14.6" r="4.6"/><path d="M13 12.1 V17.1 L17 14.6 Z"/></g></svg>
<svg style="left:679px;top:86px" width="20" height="20" viewBox="0 0 20 20"><g fill="none" stroke="#444" stroke-width="1.2"><path d="M6.3 3.5 Q6.3 0.6 10 0.6 Q13.7 0.6 13.7 3.5 Z"/><path d="M4.2 5.2 H15.8 M4.3 5.2 V12 M15.5 5.2 V14.5 M2.1 3 L4.2 5.2 M18 3 L15.8 5.2 M0 9.6 H4.3 M15.5 9.6 H19.9 M10 9 V13.8"/><path d="M1 12.2 H9 V15.2 H5 M1 12.2 V17.8 L9.5 19.7 L18.5 16.2 Q18.8 14.8 17 14.5 L10 16.2"/></g></svg>
<svg style="left:743px;top:87px" width="21" height="18" viewBox="0 0 21 18"><path d="M0.8 7.3 L10.9 0.7 V4.4 Q19 5.5 19.8 17 Q16.5 10.3 10.9 10 V14.3 Z" fill="none" stroke="#222" stroke-width="1.2" stroke-linejoin="miter"/></svg>
<svg style="left:806.5px;top:87px" width="21" height="17" viewBox="0 0 21 17"><path d="M20.2 7.6 L11.5 1 V4.8 Q2.5 5.8 1.2 16.2 Q4.5 10.5 11.5 10.2 V14.2 Z" fill="none" stroke="#222" stroke-width="1.2"/></svg>
<svg style="left:871.5px;top:86px" width="18" height="18" viewBox="0 0 18 18"><circle cx="8" cy="8" r="7.2" fill="none" stroke="#222" stroke-width="1.3"/><path d="M13 13 L16.5 16.5" stroke="#222" stroke-width="1.5"/><path d="M5 8 H11 M8 5 V11" stroke="#222" stroke-width="1.3"/></svg>
<svg style="left:935px;top:86px" width="18" height="18" viewBox="0 0 18 18"><circle cx="8" cy="8" r="7.2" fill="none" stroke="#222" stroke-width="1.3"/><path d="M13 13 L16.5 16.5" stroke="#222" stroke-width="1.5"/><path d="M5 8 H11" stroke="#222" stroke-width="1.3"/></svg>
<div class="a" style="left:981px;top:76.5px;width:80px;height:34px;border:1px solid #d6d6d6;border-radius:4px;background:#fff"></div>
<div class="t" style="left:996.5px;top:85.5px;font-size:15px;color:#333;font-weight:400;">100%</div>
<div class="a" id="canvas"></div>
<div class="a" style="left:520px;top:808px;width:1365px;height:10px;background:#f3f3f3"></div>
<div class="a" style="left:968px;top:808.5px;width:468px;height:8px;background:#d2d2d2;border-radius:4px"></div>
<div class="a" style="left:1885px;top:114px;width:8px;height:704px;background:#f3f3f3"></div>
<div class="a" style="left:1885.3px;top:312px;width:7.5px;height:258px;background:#d2d2d2;border-radius:4px"></div>
<div class="a" style="left:1644px;top:74px;width:249px;height:148px;background:#fff"></div>
<div class="a" style="left:1656px;top:88px;width:229px;height:126px;border:2px solid #2ad6c8"></div>
<svg style="left:1868px;top:197px" width="16" height="16" viewBox="0 0 16 16"><circle cx="7.5" cy="7.5" r="6.5" fill="#fff" stroke="#2ad6c8" stroke-width="1.8"/></svg>
<svg style="left:1674px;top:118px" width="72" height="12" viewBox="0 0 72 12">
<rect x="1" y="1" width="6" height="4.8" fill="#9cc6dc"/><rect x="1" y="1" width="1" height="4.8" fill="#2a7fa6"/><rect x="3.3" y="3" width="2" height="1" fill="#0d3c55"/>
<path d="M7.5 3.4 H28" stroke="#6a6a6a" stroke-width="0.9"/><path d="M26.5 1.8 L29.5 3.4 L26.5 5 Z" fill="#111"/>
<rect x="30" y="1" width="6" height="4.8" fill="#9cc6dc"/><rect x="30" y="1" width="1.3" height="4.8" fill="#0d3c55"/><rect x="34.7" y="1" width="1.3" height="4.8" fill="#0d3c55"/>
<path d="M36.5 3.4 H61" stroke="#6a6a6a" stroke-width="0.9"/><path d="M59.5 1.8 L62.5 3.4 L59.5 5 Z" fill="#111"/>
<rect x="63" y="1" width="6" height="4.8" fill="#9cc6dc"/><rect x="68" y="1" width="1" height="4.8" fill="#2a7fa6"/><rect x="65" y="2.6" width="2.2" height="2" fill="#0d3c55"/>
<rect x="0" y="7.5" width="6" height="1.6" fill="#b9a890"/><rect x="29" y="7.5" width="11" height="1.6" fill="#a9a4b0"/><rect x="62.5" y="7.5" width="6.5" height="1.6" fill="#9aa0b8"/>
</svg>
<div class="a" id="rstrip"></div>
<div class="a" style="left:1894px;top:136px;width:26px;height:1px;background:#d0d0d0"></div>
<div class="a" style="left:1894px;top:256.5px;width:26px;height:1px;background:#d0d0d0"></div>
<div class="a" style="left:1894px;top:375.5px;width:26px;height:1px;background:#d0d0d0"></div>
<div class="a" style="left:1894px;top:506.5px;width:26px;height:1px;background:#d0d0d0"></div>
<div class="t" style="left:1892px;width:26px;text-align:center;top:48.0px;font-size:15px;color:#111">数</div>
<div class="t" style="left:1892px;width:26px;text-align:center;top:67.6px;font-size:15px;color:#111">据</div>
<div class="t" style="left:1892px;width:26px;text-align:center;top:87.2px;font-size:15px;color:#111">源</div>
<div class="t" style="left:1892px;width:26px;text-align:center;top:148.3px;font-size:15px;color:#111">离</div>
<div class="t" style="left:1892px;width:26px;text-align:center;top:168.2px;font-size:15px;color:#111">线</div>
<div class="t" style="left:1892px;width:26px;text-align:center;top:188.1px;font-size:15px;color:#111">资</div>
<div class="t" style="left:1892px;width:26px;text-align:center;top:208.0px;font-size:15px;color:#111">源</div>
<div class="t" style="left:1892px;width:26px;text-align:center;top:266.7px;font-size:15px;color:#111">三</div>
<div class="t" style="left:1892px;width:26px;text-align:center;top:286.9px;font-size:15px;color:#111">方</div>
<div class="t" style="left:1892px;width:26px;text-align:center;top:307.1px;font-size:15px;color:#111">服</div>
<div class="t" style="left:1892px;width:26px;text-align:center;top:327.3px;font-size:15px;color:#111">务</div>
<div class="t" style="left:1892px;width:26px;text-align:center;top:386.2px;font-size:15px;color:#111">命</div>
<div class="t" style="left:1892px;width:26px;text-align:center;top:407.4px;font-size:15px;color:#111">名</div>
<div class="t" style="left:1892px;width:26px;text-align:center;top:424px;font-size:15px;color:#111">S</div>
<div class="t" style="left:1892px;width:26px;text-align:center;top:442.6px;font-size:15px;color:#111">q</div>
<div class="t" style="left:1892px;width:26px;text-align:center;top:459.2px;font-size:15px;color:#111">l</div>
<div class="a" id="bottom"></div>
<svg style="left:41px;top:826px" width="19" height="17" viewBox="0 0 19 17"><g fill="none" stroke="#333" stroke-width="1.2"><path d="M5 4 Q5 0.8 8.5 0.8 Q12 0.8 12 4"/><path d="M3.5 4 H13.5 M4.5 4 V10 Q4.5 14 8 15.5 M1 3 L3.5 5 M1 15.5 L4 12.5 M14 2 L12 4"/></g><path d="M9 10.5 H18 M9 13 H18 M9 15.5 H18 M8 8 V16" stroke="#333" stroke-width="1.3"/></svg>
<div class="t" style="left:67.0px;top:827.0px;font-size:15px;color:#222;font-weight:400;">调试信息</div>
<svg style="left:154px;top:827.5px" width="17" height="14" viewBox="0 0 17 14"><path d="M0 1 H2 M4.5 1 H17 M0 7 H2 M4.5 7 H17 M0 13 H2 M4.5 13 H17" stroke="#333" stroke-width="1.8"/></svg>
<div class="t" style="left:182.5px;top:827.0px;font-size:15px;color:#222;font-weight:400;">问题</div>
<div class="a" style="left:200.5px;top:809.5px;width:22px;height:22px;border-radius:50%;background:#f06a6a"></div>
<div class="t" style="left:200.5px;width:22px;text-align:center;top:813px;font-size:15px;color:#fff">4</div>
<div class="a" id="status"></div>
<div class="t" style="left:25.0px;top:857.4px;font-size:15px;color:#222;font-weight:400;">数据源初始化完毕</div>
<div class="mask"></div>
<div class="dlg"></div>
<div class="t" style="left:423.0px;top:162.7px;font-size:20px;color:#303133;font-weight:400;">数据库操作保存数据.bizx属性设置</div>
<svg style="left:1440px;top:159px" width="18" height="17" viewBox="0 0 18 17"><path d="M1 5.5 V1 H5.5 M12.5 1 H17 V5.5 M17 11.5 V16 H12.5 M5.5 16 H1 V11.5" fill="none" stroke="#409eff" stroke-width="1.8"/></svg>
<svg style="left:1481px;top:162px" width="13" height="13" viewBox="0 0 13 13"><path d="M0.5 0.5 L12.5 12.5 M12.5 0.5 L0.5 12.5" stroke="#909399" stroke-width="1.3"/></svg>
<div class="a" style="left:448px;top:233.5px;width:300px;height:14px;overflow:hidden"><div class="t" style="left:24.7px;top:-6px;font-size:18px;color:#409eff">设置</div><div class="t" style="left:159px;top:-6px;font-size:18px;color:#606266">描述</div></div>
<div class="a" style="left:448px;top:258px;width:1004px;height:3px;background:#e4e7ed"></div>
<div class="a" style="left:448px;top:258px;width:85px;height:3px;background:#409eff"></div>
<div class="t" style="left:475px;top:285px;font-size:16px;color:#f56c6c">*</div>
<div class="t" style="left:488.0px;top:283.5px;font-size:18px;color:#606266;font-weight:400;">显示名称</div>
<div class="a" style="left:573px;top:278px;width:879px;height:35px;border:1px solid #dcdfe6;border-radius:4px"></div>
<div class="t" style="left:586.4px;top:288.0px;font-size:15px;color:#303133;font-weight:400;">数据库操作保存数据</div>
<div class="t" style="left:488.0px;top:342.6px;font-size:18px;color:#606266;font-weight:400;">访问权限</div>
<div class="a" style="left:573px;top:341px;width:50px;height:25px;border-radius:13px;background:#dcdfe6"></div>
<div class="a" style="left:575px;top:343px;width:21px;height:21px;border-radius:50%;background:#fff"></div>
<div class="t" style="left:448.0px;top:401.0px;font-size:18px;color:#606266;font-weight:400;">变量定义:</div>
<svg style="left:1375px;top:399px" width="20" height="20" viewBox="0 0 20 20"><path d="M10 0.5 V19.5 M0.5 10 H19.5" stroke="#409eff" stroke-width="1.6"/></svg>
<svg style="left:1423.5px;top:398.3px" width="20" height="21" viewBox="0 0 20 21"><g fill="none" stroke="#409eff" stroke-width="1.6"><path d="M0.5 4 H19.5"/><path d="M6.5 4 V1 H13.5 V4"/><path d="M2.5 4 V20 H17.5 V4"/><path d="M7.8 8 V16 M12.2 8 V16"/></g></svg>
<div class="a" style="left:448px;top:430.5px;width:1004px;height:94px;border:1px solid #ebeef5"></div>
<div class="a" style="left:449px;top:431.5px;width:1000.5px;height:33px;background:#f7f7f7;border-bottom:1px solid #ebeef5"></div>
<div class="a" style="left:496px;top:431.5px;width:1px;height:33px;background:#e8e8e8"></div>
<div class="a" style="left:796px;top:431.5px;width:1px;height:33px;background:#e8e8e8"></div>
<div class="a" style="left:1097.5px;top:431.5px;width:1px;height:33px;background:#e8e8e8"></div>
<div class="a" style="left:1148.5px;top:431.5px;width:1px;height:33px;background:#e8e8e8"></div>
<div class="a" style="left:1449px;top:431.5px;width:1px;height:33px;background:#e8e8e8"></div>
<div class="t" style="left:468.0px;top:440.0px;font-size:17px;color:#606266;font-weight:700;top:439.5px">#</div>
<div class="t" style="left:630.0px;top:439.0px;font-size:18px;color:#606266;font-weight:700;">名称</div>
<div class="t" style="left:913.4px;top:439.0px;font-size:18px;color:#606266;font-weight:700;">数据类型</div>
<div class="t" style="left:1106.7px;top:439.0px;font-size:18px;color:#606266;font-weight:700;">数组</div>
<div class="t" style="left:1282.0px;top:439.0px;font-size:18px;color:#606266;font-weight:700;">描述</div>
<div class="t" style="left:914.7px;top:485.2px;font-size:18px;color:#909399;font-weight:400;">暂无数据</div>
<div class="t" style="left:448.0px;top:538.7px;font-size:18px;color:#606266;font-weight:400;">参数配置表:</div>
<svg style="left:1337.5px;top:535px" width="22" height="23" viewBox="0 0 22 23"><g fill="none" stroke="#409eff" stroke-width="1.6"><path d="M5 6 H3 Q1 6 1 8 V20 Q1 22 3 22 H14 Q16 22 16 20 V12"/><path d="M8.5 7 V17 M5 13.5 L8.5 17 L12 13.5"/><path d="M18 1 V7 M15 4 H21"/></g></svg>
<svg style="left:1380.5px;top:535px" width="22" height="23" viewBox="0 0 22 23"><g fill="none" stroke="#409eff" stroke-width="1.6"><path d="M5 6 H3 Q1 6 1 8 V20 Q1 22 3 22 H14 Q16 22 16 20 V12"/><path d="M8.5 7 V17 M5 10.5 L8.5 7 L12 10.5"/><path d="M18 1 V7 M15 4 H21"/></g></svg>
<svg style="left:1423.5px;top:535px" width="20" height="21" viewBox="0 0 20 21"><g fill="none" stroke="#409eff" stroke-width="1.6"><path d="M0.5 4 H19.5"/><path d="M6.5 4 V1 H13.5 V4"/><path d="M2.5 4 V20 H17.5 V4"/><path d="M7.8 8 V16 M12.2 8 V16"/></g></svg>
<div class="a" style="left:448.5px;top:568.3px;width:1003px;height:121px;border:1px solid #ebeef5;border-bottom:none"></div>
<div class="a" style="left:449.5px;top:569.3px;width:1000px;height:33px;background:#f7f7f7;border-bottom:1px solid #ebeef5"></div>
<div class="a" style="left:533px;top:569.3px;width:1px;height:120px;background:#ebeef5"></div>
<div class="a" style="left:822px;top:569.3px;width:1px;height:120px;background:#ebeef5"></div>
<div class="a" style="left:1109.5px;top:569.3px;width:1px;height:120px;background:#ebeef5"></div>
<div class="a" style="left:1160.5px;top:569.3px;width:1px;height:120px;background:#ebeef5"></div>
<div class="a" style="left:1449px;top:569.3px;width:1px;height:120px;background:#ebeef5"></div>
<div class="a" style="left:449.5px;top:643.2px;width:1000px;height:1px;background:#ebeef5"></div>
<div class="t" style="left:662.0px;top:577.0px;font-size:18px;color:#606266;font-weight:700;">名称</div>
<div class="t" style="left:932.3px;top:576.4px;font-size:18px;color:#606266;font-weight:700;">数据类型</div>
<div class="t" style="left:1118.8px;top:576.4px;font-size:18px;color:#606266;font-weight:700;">数组</div>
<div class="t" style="left:1288.2px;top:576.4px;font-size:18px;color:#606266;font-weight:700;">描述</div>
<div class="t" style="left:474.3px;top:615.0px;font-size:18px;color:#606266;font-weight:400;">参数</div>
<div class="t" style="left:465.0px;top:658.5px;font-size:18px;color:#606266;font-weight:400;">返回值</div>
<div class="a" style="left:535px;top:606.3px;width:287.2px;height:34.9px;border:1px solid #dcdfe6;border-radius:5px;background:#fff"></div>
<div class="a" style="left:823.8px;top:606.3px;width:286.8px;height:34.9px;border:1px solid #dcdfe6;border-radius:5px;background:#fff"></div>
<div class="a" style="left:1161.2px;top:606.3px;width:288.8px;height:34.9px;border:1px solid #dcdfe6;border-radius:5px;background:#fff"></div>
<svg style="left:1084px;top:619.0px" width="13" height="8" viewBox="0 0 13 8"><path d="M0.5 0.5 L6.5 7 L12.5 0.5" fill="none" stroke="#b0b3b8" stroke-width="1.2"/></svg>
<div class="a" style="left:1128.3px;top:617.4px;width:17px;height:17.5px;border:1px solid #dcdfe6;border-radius:2px;background:#fff"></div>
<div class="a" style="left:535px;top:649.4px;width:287.2px;height:34.8px;border:1px solid #dcdfe6;border-radius:5px;background:#fff"></div>
<div class="a" style="left:823.8px;top:649.4px;width:286.8px;height:34.8px;border:1px solid #dcdfe6;border-radius:5px;background:#fff"></div>
<div class="a" style="left:1161.2px;top:649.4px;width:288.8px;height:34.8px;border:1px solid #dcdfe6;border-radius:5px;background:#fff"></div>
<svg style="left:1084px;top:662.1px" width="13" height="8" viewBox="0 0 13 8"><path d="M0.5 0.5 L6.5 7 L12.5 0.5" fill="none" stroke="#b0b3b8" stroke-width="1.2"/></svg>
<div class="a" style="left:1128.3px;top:660.5px;width:17px;height:17.5px;border:1px solid #dcdfe6;border-radius:2px;background:#fff"></div>
<div class="t" style="left:549.0px;top:615.8px;font-size:15px;color:#505256;font-weight:400;">param</div>
<div class="t" style="left:836.6px;top:615.8px;font-size:15px;color:#505256;font-weight:400;">aproject</div>
<div class="t" style="left:549.0px;top:659.0px;font-size:15px;color:#505256;font-weight:400;">out</div>
<div class="t" style="left:836.6px;top:659.0px;font-size:15px;color:#505256;font-weight:400;">Int</div>
<div class="a" style="left:443.3px;top:598px;width:1013.4px;height:93px;border:4px solid #ff1c1c;border-radius:5px"></div>
<div class="a" style="left:1316.3px;top:700.4px;width:68.5px;height:34px;border:1px solid #dcdfe6;border-radius:4px;background:#fff"></div>
<div class="t" style="left:1335.7px;top:710.0px;font-size:15px;color:#606266;font-weight:400;">关闭</div>
<div class="a" style="left:1403px;top:700.4px;width:70px;height:34px;border-radius:4px;background:#409eff"></div>
<div class="t" style="left:1422.6px;top:710.0px;font-size:15px;color:#fff;font-weight:700;">确定</div>
<div class="a" style="left:1477.3px;top:234.2px;width:21px;height:453.2px;background:#f1f1f1"></div>
<div class="a" style="left:1479px;top:275px;width:17px;height:392px;background:#c1c1c1"></div>
<svg style="left:1482.5px;top:242.5px" width="10" height="6" viewBox="0 0 10 6"><path d="M0 6 L5 0 L10 6 Z" fill="#505050"/></svg>
<svg style="left:1482.5px;top:673.5px" width="10" height="6" viewBox="0 0 10 6"><path d="M0 0 L5 6 L10 0 Z" fill="#a3a3a3"/></svg>
</body></html>
